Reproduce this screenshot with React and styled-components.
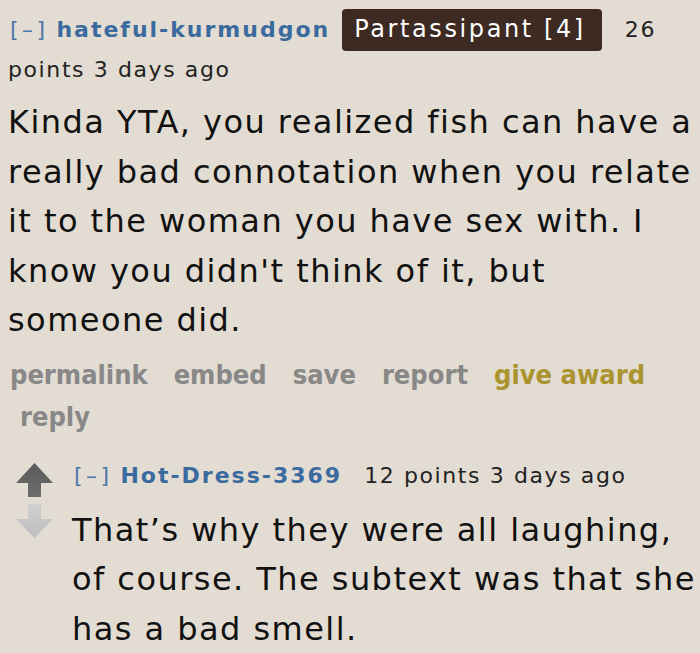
import React from "react";
import styled, { createGlobalStyle } from "styled-components";

const Global = createGlobalStyle`
  html, body { margin: 0; padding: 0; background: #e3dcd2; }
  body { width: 700px; height: 653px; overflow: hidden; font-family: "DejaVu Sans", Verdana, sans-serif; }
`;

const Page = styled.div`
  padding: 9px 0 0 8px;
  color: #111;
`;

const Tagline = styled.div`
  font-size: 22px;
  line-height: 40px;
  letter-spacing: 1.6px;
  color: #222;
  white-space: ${(p) => (p.$nowrap ? "nowrap" : "normal")};
`;

const Toggle = styled.span`
  color: #4a78aa;
  margin-left: 2px;
  margin-right: 8px;
  letter-spacing: 3.4px;
`;

const Author = styled.span`
  color: #3a6a9e;
  font-weight: bold;
  letter-spacing: 2px;
`;

const Flair = styled.span`
  background: #3d2a22;
  color: #fff;
  font-size: 24px;
  letter-spacing: 2.6px;
  padding: 6px 16px 8px 12px;
  border-radius: 4px;
  margin: 0 23px 0 12px;
`;

const Body = styled.div`
  font-size: 32px;
  line-height: 49.5px;
  letter-spacing: 1.45px;
  color: #111;
  margin-top: ${(p) => p.$mt}px;
`;

const Actions = styled.div`
  display: flex;
  flex-wrap: wrap;
  column-gap: 26px;
  font-family: "DejaVu Sans Condensed", "DejaVu Sans", sans-serif;
  font-stretch: condensed;
  font-weight: bold;
  font-size: 27px;
  line-height: 42px;
  margin-top: 8px;
  padding-left: 2px;
`;

const Action = styled.span`
  color: ${(p) => (p.$gold ? "#ab9430" : "#888")};
  padding-left: ${(p) => (p.$indent ? 10 : 0)}px;
`;

const Child = styled.div`
  display: flex;
  margin-top: 18px;
`;

const Arrows = styled.div`
  width: 64px;
  flex-shrink: 0;
  display: flex;
  flex-direction: column;
  gap: 7px;
  padding: 7px 0 0 8px;
  box-sizing: border-box;
`;

const ChildContent = styled.div`
  flex: 1;
  min-width: 0;
`;

const Score = styled.span`
  margin-left: 22px;
`;

const Arrow = ({ down, from, to }) => {
  const id = down ? "gdown" : "gup";
  return (
    <svg width="37" height="34" viewBox="0 0 37 34">
      <defs>
        <linearGradient id={id} x1="0" y1="0" x2="0" y2="1">
          <stop offset="0" stopColor={from} />
          <stop offset="1" stopColor={to} />
        </linearGradient>
      </defs>
      <path
        d={down ? "M12 0 H25 V15 H37 L18.5 34 L0 15 H12 Z" : "M18.5 0 L37 20 H25 V34 H12 V20 H0 Z"}
        fill={`url(#${id})`}
      />
    </svg>
  );
};

export default function App() {
  return (
    <>
      <Global />
      <Page>
        <Tagline>
          <Toggle>[–]</Toggle>
          <Author>hateful-kurmudgon</Author>
          <Flair>Partassipant [4]</Flair>
          26 points 3 days ago
        </Tagline>
        <Body $mt={8}>
          Kinda YTA, you realized fish can have a really bad connotation when you relate it to the woman you have sex with. I know you didn't think of it, but someone did.
        </Body>
        <Actions>
          <Action>permalink</Action>
          <Action>embed</Action>
          <Action>save</Action>
          <Action>report</Action>
          <Action $gold>give award</Action>
          <Action $indent>reply</Action>
        </Actions>
        <Child>
          <Arrows>
            <Arrow from="#5a5a5a" to="#6e6e6e" />
            <Arrow down from="#d0d0d0" to="#bdbdbd" />
          </Arrows>
          <ChildContent>
            <Tagline $nowrap>
              <Toggle>[–]</Toggle>
              <Author>Hot-Dress-3369</Author>
              <Score>12 points 3 days ago</Score>
            </Tagline>
            <Body $mt={10}>
              That’s why they were all laughing, of course. The subtext was that she has a bad smell.
            </Body>
          </ChildContent>
        </Child>
      </Page>
    </>
  );
}
